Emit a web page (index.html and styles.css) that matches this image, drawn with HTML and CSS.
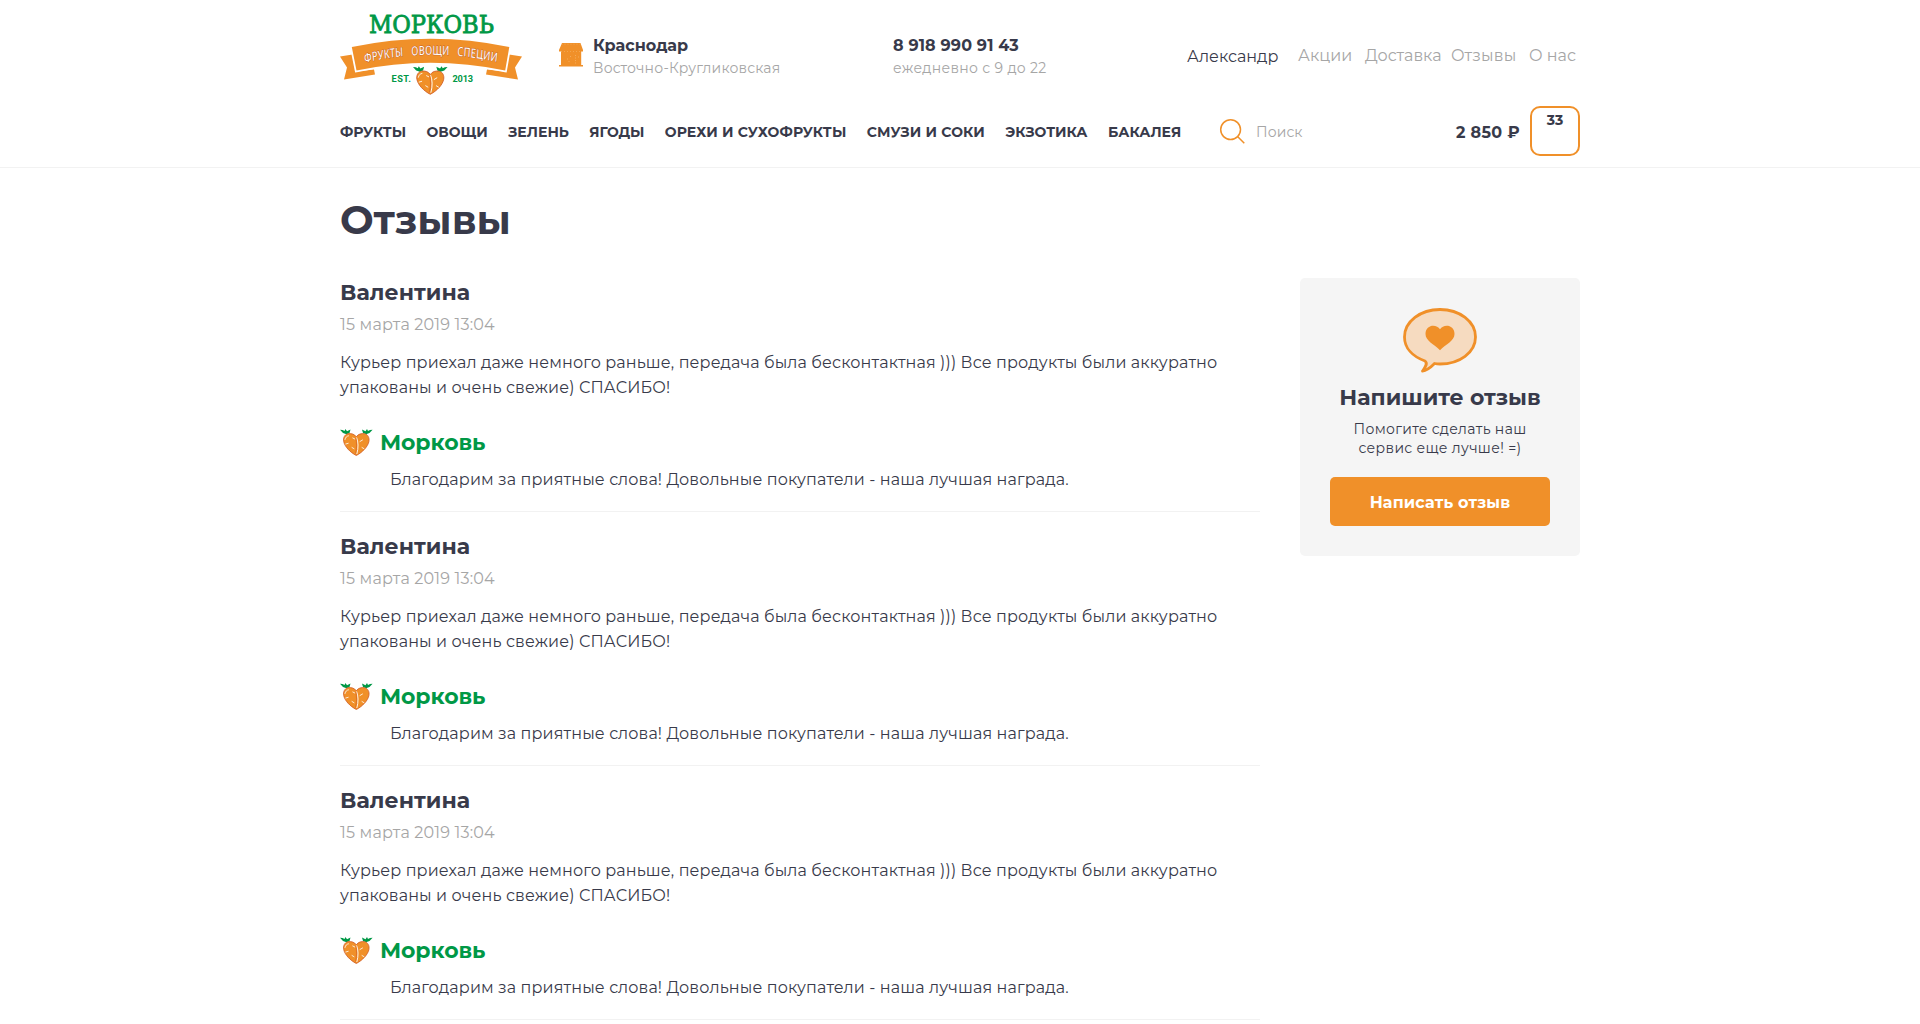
FILE: index.html
```
<!DOCTYPE html>
<html lang="ru">
<head>
<meta charset="utf-8">
<title>Отзывы</title>
<link rel="stylesheet" href="styles.css">
</head>
<body>
<svg class="sprite" width="0" height="0" aria-hidden="true">
  <symbol id="carrot" viewBox="0 0 33 27">
    <path d="M0 .8 2.600 1 4.500 2 5.500 0 7 2.200 10.500.6 9.500 4 6.500 5.300 3 4zM32.600.8 30 1 28 2 27 0 25.500 2.200 22 .6 23 4 26 5.300 29.500 4z" fill="#009846"/>
    <path d="M16.300 7.800C14.500 5 11 4.200 8 4.700 4.500 5.500 3 9 3.700 12.500c1 5 6.300 10.800 12.600 14 6.300-3.200 11.600-9 12.600-14 .7-3.500-.8-7-4.300-7.800-3-.5-6.500.3-8.300 3.100z" fill="#f09029" stroke="#cf5a25" stroke-width=".8"/>
    <path d="M16.600 8.500c1.700 4 2 10.500.2 16.500" fill="none" stroke="#fff" stroke-width=".9"/>
    <path d="M5 10.500c.6-2.300 1.600-3.300 3.500-3.700M12.800 9l2 1M5.800 15l2.400-.7M12 18.500l2 1.200M20 12.500l2.500-1.500M22 18.500l2 1.200" fill="none" stroke="#fff" stroke-width=".8" stroke-linecap="round"/>
    <path d="M15.800 9c1 5 1 10-.2 15.500" fill="none" stroke="#cf5a25" stroke-width=".6"/>
  </symbol>
</svg>

<header class="header">
  <div class="container">
    <div class="header-top">
      <a class="logo">
        <svg width="183" height="84" viewBox="0 0 183 84">
          <text class="logo-name" x="29" y="19" textLength="125" lengthAdjust="spacingAndGlyphs">МОРКОВЬ</text>
          <g fill="#f09029">
            <path d="M0 42.500 12.500 40.500 16.500 57.500 34 55.500 35 60.500 4 65.500 7 53.500z"/>
            <path d="M182 42.500 169 40.500 165 57.500 147 55.500 146 60.500 178 65.500 175 53.500z"/>
            <path d="M11.800 33Q90.500 16.500 169.300 33L165.200 56.500Q90.500 41 16.500 56.500z" stroke="#fff" stroke-width="3.500" paint-order="stroke"/>
          </g>
          <path id="arc" d="M34 48.700Q126 33 216 48.200" fill="none"/>
          <g transform="scale(.73 1)">
            <text class="logo-tag"><textPath href="#arc" textLength="182" lengthAdjust="spacing">ФРУКТЫ ОВОЩИ СПЕЦИИ</textPath></text>
          </g>
          <text class="logo-est" x="51.500" y="67.600" textLength="19.500" lengthAdjust="spacing">EST.</text>
          <text class="logo-est" x="112.500" y="67.600" textLength="20.500" lengthAdjust="spacing">2013</text>
          <use href="#carrot" x="73" y="52" width="35" height="29"/>
        </svg>
      </a>
      <div class="shop">
        <svg width="24" height="24" viewBox="0 0 24 24">
          <path d="M3 0h18.500l2.500 7v1.500h-1.800V22H24v1.500H0V22h2V8.500H0V7z" fill="#f09029"/>
          <path d="M2.500 1.200h19M2 8.500h20" stroke="#f8c48a" stroke-width=".4" stroke-dasharray="1 2"/>
          <path d="M8 16h1M11 13.500h1M9.500 18.500h1M16.500 12v9M19 14h1" stroke="#f8c48a" stroke-width=".5" stroke-dasharray="1 1.500"/>
        </svg>
        <div>
          <div class="contact-main city">Краснодар</div>
          <div class="contact-note address">Восточно-Кругликовская</div>
        </div>
      </div>
      <div class="phone">
        <div class="contact-main number">8 918 990 91 43</div>
        <div class="contact-note hours">ежедневно с 9 до 22</div>
      </div>
      <a class="user">Александр</a>
      <nav class="links">
        <a class="w-sale">Акции</a><a class="w-delivery">Доставка</a><a class="w-reviews">Отзывы</a><a>О нас</a>
      </nav>
    </div>
    <div class="header-bottom">
      <nav class="menu">
        <a>Фрукты</a><a>Овощи</a><a>Зелень</a><a>Ягоды</a><a class="wide">Орехи и сухофрукты</a><a class="wide">Смузи и соки</a><a>Экзотика</a><a>Бакалея</a>
      </nav>
      <div class="search">
        <svg width="25" height="25" viewBox="0 0 25 25" fill="none" stroke="#f09029" stroke-width="1.500"><circle cx="10.600" cy="10.600" r="9.900"/><path d="M17.500 17.500 24.300 24.300"/></svg>
        <span>Поиск</span>
      </div>
      <div class="total">2 850 ₽</div>
      <div class="cart">33</div>
    </div>
  </div>
</header>

<main class="container">
  <h1>Отзывы</h1>
  <div class="columns">
    <section class="reviews">
      <article class="review">
        <h2>Валентина</h2>
        <div class="date">15 марта 2019 13:04</div>
        <p>Курьер приехал даже немного раньше, передача была бесконтактная ))) Все продукты были аккуратно упакованы и очень свежие) СПАСИБО!</p>
        <div class="reply-head"><svg width="33" height="27"><use href="#carrot"/></svg><span>Морковь</span></div>
        <p class="reply">Благодарим за приятные слова! Довольные покупатели - наша лучшая награда.</p>
      </article>
      <article class="review">
        <h2>Валентина</h2>
        <div class="date">15 марта 2019 13:04</div>
        <p>Курьер приехал даже немного раньше, передача была бесконтактная ))) Все продукты были аккуратно упакованы и очень свежие) СПАСИБО!</p>
        <div class="reply-head"><svg width="33" height="27"><use href="#carrot"/></svg><span>Морковь</span></div>
        <p class="reply">Благодарим за приятные слова! Довольные покупатели - наша лучшая награда.</p>
      </article>
      <article class="review">
        <h2>Валентина</h2>
        <div class="date">15 марта 2019 13:04</div>
        <p>Курьер приехал даже немного раньше, передача была бесконтактная ))) Все продукты были аккуратно упакованы и очень свежие) СПАСИБО!</p>
        <div class="reply-head"><svg width="33" height="27"><use href="#carrot"/></svg><span>Морковь</span></div>
        <p class="reply">Благодарим за приятные слова! Довольные покупатели - наша лучшая награда.</p>
      </article>
    </section>
    <aside class="card">
      <svg width="74" height="65" viewBox="0 0 74 65">
        <path d="M37 1.500C56.500 1.500 72.500 13.500 72.500 29S56.500 56 37 56C35 56 33 55.800 31.500 55.500 28.500 58.500 25 62.500 19.500 63 21.500 60 25.500 56 22 53 9.500 48.500 1.500 40 1.500 29 1.500 13.500 17.500 1.500 37 1.500z" fill="#f6dbc0" stroke="#f09029" stroke-width="2.800" stroke-linejoin="round"/>
        <path d="M37 21.300C33.500 15.500 22.500 16.500 22.500 26c0 7 8.500 10 14.500 16.300C43 36 51.500 33 51.500 26c0-9.500-11-10.500-14.500-4.700z" fill="#f09029"/>
      </svg>
      <h3>Напишите отзыв</h3>
      <p>Помогите сделать наш<br>сервис еще лучше! =)</p>
      <a class="button">Написать отзыв</a>
    </aside>
  </div>
</main>
</body>
</html>
```
FILE: styles.css
```
* { box-sizing: border-box; }
html { overflow: hidden; }
body {
  margin: 0;
  height: 1024px;
  overflow: hidden;
  background: #fff;
  color: #383a4a;
  font: 400 16px/25px "Montserrat", "Open Sans", sans-serif;
}
h1, h2, h3, p { margin: 0; }
svg { display: block; flex: none; overflow: visible; }
.sprite { position: absolute; }
.container { width: 1240px; margin: 0 auto; }

.header { height: 168px; border-bottom: 1px solid #f2f2f2; }
.header-top { display: flex; height: 106px; padding-top: 14px; }
.logo { width: 219px; }
.logo-name { font: 400 24px "DejaVu Serif", serif; fill: #009846; stroke: #009846; stroke-width: .8; }
.logo-tag { font: 400 12.5px "Noto Sans", sans-serif; word-spacing: 7px; fill: #fff; stroke: #b9542a; stroke-width: .8; paint-order: stroke; }
.logo-est { font: 700 9.2px "Liberation Sans Narrow", "Roboto", sans-serif; fill: #009846; }
.shop { display: flex; gap: 10px; width: 334px; }
.shop svg { margin-top: 29px; }
.contact-main { margin-top: 20px; font-weight: 700; line-height: 24px; }
.contact-note { color: #a6a6a6; font-size: 14px; line-height: 20px; letter-spacing: .15px; }
.hours { letter-spacing: .33px; }
.number { letter-spacing: .15px; }
.user { width: 111px; margin-left: 294px; margin-top: 31px; line-height: 24px; }
.phone { width: 0; white-space: nowrap; }
.links { display: flex; margin-top: 30px; line-height: 24px; color: #a6a6a6; white-space: nowrap; }
.w-sale { width: 67px; }
.w-delivery { width: 86px; }
.w-reviews { width: 78px; letter-spacing: .2px; }

.header-bottom { display: flex; align-items: center; height: 50px; }
.menu { display: flex; gap: 20.4px; width: 880px; padding-top: 2px; font-size: 14px; font-weight: 700; text-transform: uppercase; white-space: nowrap; }
.wide { letter-spacing: .13px; }
.search { display: flex; align-items: center; gap: 11px; width: 236px; color: #a6a6a6; font-size: 14px; letter-spacing: .1px; }
.search span { padding-top: 2px; }
.total { width: 74px; padding-top: 2px; font-weight: 700; letter-spacing: .3px; white-space: nowrap; }
.cart { width: 50px; height: 50px; border: 2px solid #f09029; border-radius: 10px; font-size: 14px; font-weight: 700; line-height: 24px; text-align: center; }

h1 { padding-top: 28px; font-size: 40px; line-height: 48px; }
.columns { display: flex; justify-content: space-between; align-items: flex-start; padding-top: 34px; }
.reviews { width: 920px; }
.review { height: 234px; margin-bottom: 20px; border-bottom: 1px solid #f2f2f2; }
h2 { font-size: 22px; line-height: 30px; letter-spacing: .05px; }
.date { margin-top: 5px; line-height: 24px; color: #a6a6a6; letter-spacing: .18px; }
.review p { margin-top: 13px; letter-spacing: .125px; }
.reply-head { display: flex; gap: 7px; height: 30px; margin-top: 27px; align-items: center; color: #009846; font-size: 22px; font-weight: 700; letter-spacing: -.1px; }
.review .reply { margin-top: 10px; padding-left: 50px; }

.card { display: flex; flex-direction: column; align-items: center; width: 280px; height: 278px; padding: 30px; background: #f5f5f5; border-radius: 5px; text-align: center; }
h3 { margin-top: 10px; font-size: 22px; line-height: 30px; white-space: nowrap; }
.card p { margin-top: 7px; font-size: 14px; line-height: 19px; letter-spacing: .33px; }
.button { width: 220px; height: 49px; margin-top: 19px; padding-top: 1px; border-radius: 5px; background: #f09029; color: #fff; font-weight: 700; line-height: 50px; letter-spacing: .17px; }
```
